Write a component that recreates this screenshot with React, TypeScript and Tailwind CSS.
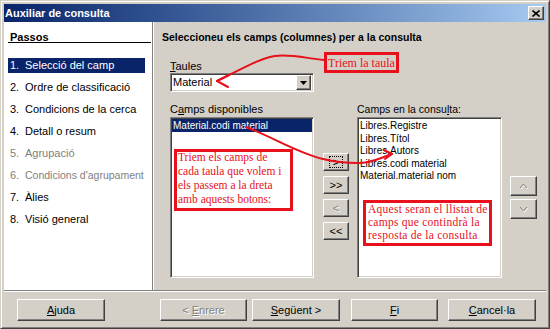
import React from "react";

const raised =
  "border border-t-white border-l-white border-r-[#404040] border-b-[#404040] shadow-[inset_-1px_-1px_#808080] bg-[#d4d0c8]";
const sunken =
  "border border-t-[#808080] border-l-[#808080] border-r-white border-b-white shadow-[inset_1px_1px_#404040,inset_-1px_-1px_#d4d0c8] bg-white";
const disabledText = "text-[#808080] [text-shadow:1px_1px_#fff]";
const serif = "font-['Liberation_Serif','Times_New_Roman',serif]";

type Step = { n: string; label: string; active?: boolean; disabled?: boolean };

const steps: Step[] = [
  { n: "1.", label: "Selecció del camp", active: true },
  { n: "2.", label: "Ordre de classificació" },
  { n: "3.", label: "Condicions de la cerca" },
  { n: "4.", label: "Detall o resum" },
  { n: "5.", label: "Agrupació", disabled: true },
  { n: "6.", label: "Condicions d'agrupament", disabled: true },
  { n: "7.", label: "Àlies" },
  { n: "8.", label: "Visió general" },
];

const chosenFields = [
  "Libres.Registre",
  "Libres.Títol",
  "Libres.Autors",
  "Libres.codi material",
  "Material.material nom",
];

const U = ({ children }: { children: React.ReactNode }) => <span className="underline">{children}</span>;

const Chevron = ({ down = false }: { down?: boolean }) => (
  <svg width="9" height="6" viewBox="0 0 9 6" className="overflow-visible">
    <polyline
      points={down ? "1,1 4.5,5 8,1" : "1,5 4.5,1 8,5"}
      fill="none"
      stroke="#fff"
      strokeWidth="1"
      transform="translate(1,1)"
    />
    <polyline points={down ? "1,1 4.5,5 8,1" : "1,5 4.5,1 8,5"} fill="none" stroke="#808080" strokeWidth="1" />
  </svg>
);

const App: React.FC = () => {
  return (
    <div className="relative h-[329px] w-[550px] overflow-hidden whitespace-nowrap bg-[#d4d0c8] font-['Liberation_Sans',Arial,sans-serif] text-[11px] text-black">
      <div className="flex h-full flex-col border border-t-[#d4d0c8] border-l-[#d4d0c8] border-r-[#404040] border-b-[#404040] p-[3px] shadow-[inset_1px_1px_#fff,inset_-1px_-1px_#808080]">
        {/* title bar */}
        <div className="flex h-[18px] items-center justify-between bg-gradient-to-r from-[#0a246a] to-[#a6caf0] pl-[1px] pr-[2px]">
          <span className="text-[11px] font-bold text-white">Auxiliar de consulta</span>
          <div className={`flex h-[14px] w-[16px] items-center justify-center ${raised}`}>
            <svg width="8" height="7" viewBox="0 0 8 7">
              <path d="M0.5 0.5 L7.5 6.5 M7.5 0.5 L0.5 6.5" stroke="#000" strokeWidth="1.6" />
            </svg>
          </div>
        </div>

        {/* body */}
        <div className="flex h-[268px]">
          <div className="w-[149px] border-r border-r-[#808080] bg-white pt-[9px] pl-[4px] pr-[1px]">
            <div className="h-[12px] border-b border-b-black pl-[2px] font-bold leading-[12px]">Passos</div>
            <div className="mt-[15px] flex flex-col gap-[7px]">
              {steps.map((s) => (
                <div
                  key={s.n}
                  className={`flex h-[15px] w-[137px] items-center pl-[2px] leading-[15px] ${
                    s.active ? "bg-[#0a246a] text-white" : s.disabled ? "text-[#808080]" : ""
                  }`}
                >
                  <span className="w-[15px] shrink-0">{s.n}</span>
                  <span className={s.n === "6." ? "text-[10.5px]" : ""}>{s.label}</span>
                </div>
              ))}
            </div>
          </div>

          <div className="flex-1 border-l border-l-white pt-[9px] pl-[8px]">
            <div className="h-[13px] text-[10.5px] font-bold leading-[13px]">
              Seleccioneu els camps (columnes) per a la consulta
            </div>
            <div className="pl-[8px]">
              <div className="mt-[16px] h-[13px] leading-[13px]">
                <U>T</U>aules
              </div>
              <div className={`flex h-[19px] w-[144px] items-center justify-between pl-[2px] pr-[2px] ${sunken}`}>
                <span>Material</span>
                <div className={`flex h-[15px] w-[15px] items-center justify-center ${raised}`}>
                  <svg width="7" height="4" viewBox="0 0 7 4">
                    <path d="M0 0 H7 L3.5 4 Z" fill="#000" />
                  </svg>
                </div>
              </div>

              <div className="mt-[11px] flex">
                <div className="w-[144px]">
                  <div className="h-[13px] leading-[13px]">
                    C<U>a</U>mps disponibles
                  </div>
                  <div className={`mt-[1px] h-[161px] p-[1px] ${sunken}`}>
                    <div className="h-[13px] bg-[#0a246a] pl-[1px] text-[10px] leading-[13px] text-white">
                      Material.codi material
                    </div>
                  </div>
                </div>

                <div className="ml-[9px] flex w-[26px] flex-col gap-[5px] pt-[50px]">
                  <div className={`flex h-[18px] items-center justify-center ${raised}`}>
                    <div className="flex h-[12px] w-[14px] items-center justify-center border border-dotted border-black">
                      &gt;
                    </div>
                  </div>
                  <div className={`flex h-[18px] items-center justify-center ${raised}`}>&gt;&gt;</div>
                  <div className={`flex h-[18px] items-center justify-center ${raised} ${disabledText}`}>&lt;</div>
                  <div className={`flex h-[18px] items-center justify-center ${raised}`}>&lt;&lt;</div>
                </div>

                <div className="ml-[8px] w-[145px]">
                  <div className="h-[13px] text-[10.5px] leading-[13px]">
                    Camps en la consu<U>l</U>ta:
                  </div>
                  <div className={`mt-[1px] h-[161px] p-[1px] ${sunken}`}>
                    {chosenFields.map((f) => (
                      <div key={f} className="h-[12.5px] pl-[1px] text-[10px] leading-[13px]">
                        {f}
                      </div>
                    ))}
                  </div>
                </div>

                <div className="ml-[8px] flex w-[27px] flex-col gap-[3px] pt-[73px]">
                  <div className={`flex h-[20px] items-center justify-center ${raised}`}>
                    <Chevron />
                  </div>
                  <div className={`flex h-[20px] items-center justify-center ${raised}`}>
                    <Chevron down />
                  </div>
                </div>
              </div>
            </div>
          </div>
        </div>

        {/* separator */}
        <div className="h-[2px] border-t border-t-[#808080] border-b border-b-white" />

        {/* buttons */}
        <div className="flex h-[33px] items-start pt-[7px] pl-[13px]">
          <div className={`flex h-[22px] w-[88px] items-center justify-center ${raised}`}>
            <U>A</U>juda
          </div>
          <div className={`ml-[55px] flex h-[22px] w-[87px] items-center justify-center ${raised} ${disabledText}`}>
            &lt;&nbsp;<U>E</U>nrere
          </div>
          <div className={`ml-[5px] flex h-[22px] w-[88px] items-center justify-center ${raised}`}>
            <U>S</U>egüent&nbsp;&gt;
          </div>
          <div className={`ml-[11px] flex h-[22px] w-[87px] items-center justify-center ${raised}`}>
            <U>F</U>i
          </div>
          <div className={`ml-[10px] flex h-[22px] w-[88px] items-center justify-center ${raised}`}>
            <U>C</U>ancel·la
          </div>
        </div>
      </div>

      {/* red annotations */}
      <svg className="pointer-events-none absolute left-0 top-0" width="550" height="329" viewBox="0 0 550 329">
        <g fill="none" stroke="#e8101a" strokeWidth="2" strokeLinecap="round" strokeLinejoin="round">
          <path d="M324 60 C305 58 290 54 275 56 C260 58 240 70 217 81" />
          <path d="M229 75 L217 81 L228 87" />
          <path d="M246 127 C275 138 295 152 323 159 C335 162 345 163 358 163 C372 163 380 158 392 154" />
          <path d="M384 150 L392 154 L385 159" />
        </g>
      </svg>

      <div
        className={`absolute left-[324px] top-[52px] flex h-[21px] w-[75px] items-center justify-center border-[3px] border-[#e8101a] text-[12px] text-[#e8101a] ${serif}`}
      >
        Triem la taula
      </div>
      <div
        className={`absolute left-[174px] top-[149px] h-[62px] w-[119px] border-[3px] border-[#e8101a] bg-white pl-[1px] text-[11.5px] leading-[14px] text-[#e8101a] ${serif}`}
      >
        <div className="-mt-[2px]">
          Triem els camps de
          <br />
          cada taula que volem i
          <br />
          els passem a la dreta
          <br />
          amb aquests botons:
        </div>
      </div>
      <div
        className={`absolute left-[363px] top-[200px] h-[46px] w-[129px] border-[3px] border-[#e8101a] bg-white pl-[2px] text-[11.5px] leading-[13px] tracking-[0.25px] text-[#e8101a] ${serif}`}
      >
        Aquest seran el llistat de
        <br />
        camps que contindrà la
        <br />
        resposta de la consulta
      </div>
    </div>
  );
};

export default App;
